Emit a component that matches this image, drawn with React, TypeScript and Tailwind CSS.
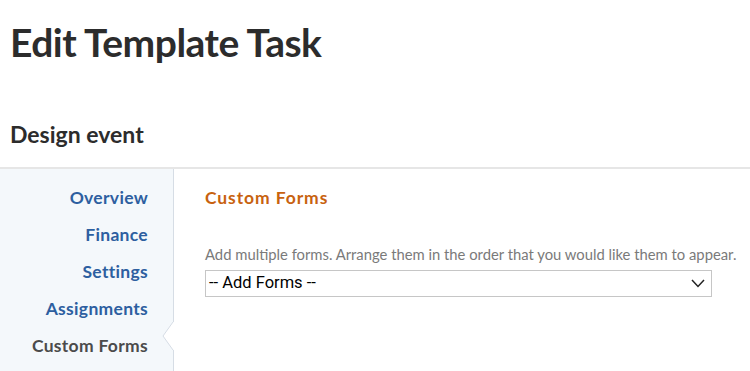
const navItems = ["Overview", "Finance", "Settings", "Assignments", "Custom Forms"];

export default function App() {
  return (
    <div className="h-[371px] w-[750px] overflow-hidden bg-white font-['Open_Sans',sans-serif] text-[#2c2c2c]">
      <h1 className="pl-[10px] pt-[18px] font-['Lato',sans-serif] text-[39px] font-bold leading-[48px] tracking-[-0.5px]">
        Edit Template Task
      </h1>
      <h2 className="mt-[52px] pl-[10px] font-['Lato',sans-serif] text-[23px] font-bold leading-[32px]">Design event</h2>

      <div className="mt-[17px] flex h-[210px] border-t-2 border-[#e6e6e6]">
        <nav className="flex w-[174px] shrink-0 flex-col items-end border-r border-[#d6dde5] bg-[#f4f8fb] pr-[25px] pt-[11px] font-['Lato',sans-serif] text-[17.5px] font-bold">
          {navItems.map((item) => {
            const active = item === "Custom Forms";
            return (
              <div
                key={item}
                className={`relative flex h-[37px] items-center tracking-[0.3px] ${active ? "text-[#4b4b4b]" : "text-[#2d5fa0]"}`}
              >
                {item}
                {active && (
                  <svg className="absolute left-[calc(100%+14px)] top-[-6px]" width="12" height="28" viewBox="0 0 12 28">
                    <path d="M11 0 L1 14 L11 28 L12 28 L12 0 Z" fill="#ffffff" />
                    <path d="M11 0 L1 14 L11 28" fill="none" stroke="#d6dde5" strokeWidth="1" />
                  </svg>
                )}
              </div>
            );
          })}
        </nav>

        <section className="flex-1 pl-[31px] pt-[18px] font-['Lato',sans-serif]">
          <h3 className="text-[17.5px] font-bold leading-[22px] tracking-[0.9px] text-[#c8620f]">Custom Forms</h3>
          <p className="mt-[35px] text-[14.8px] leading-[20px] text-[#7a7a7a]">
            Add multiple forms. Arrange them in the order that you would like them to appear.
          </p>
          <div className="mt-[6px] flex h-[27px] w-[507px] items-center justify-between border border-[#c6c6c6] pl-[3px] pr-[6px] font-['Roboto',sans-serif] text-[16.5px] text-black">
            <span>-- Add Forms --</span>
            <svg width="14" height="9" viewBox="0 0 14 9">
              <path d="M1 1 L7 7.5 L13 1" fill="none" stroke="#222" strokeWidth="1.5" />
            </svg>
          </div>
        </section>
      </div>
    </div>
  );
}
